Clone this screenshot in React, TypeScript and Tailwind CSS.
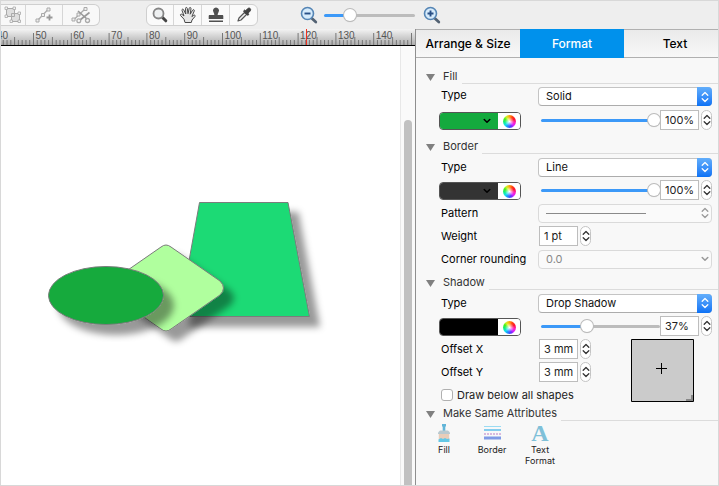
import { ReactElement, ReactNode, useEffect, useRef, useState } from "react";
import cn from "clsx";

const INPUT =
  "h-5 border border-[#bdbdbd] bg-white px-1 text-[11px] text-[#222] outline-none";

function Chevrons({ className }: { className?: string }): ReactElement {
  return (
    <svg
      viewBox="0 0 8 12"
      fill="none"
      stroke="currentColor"
      strokeWidth="1.3"
      strokeLinecap="round"
      strokeLinejoin="round"
      className={cn("h-3 w-2", className)}
    >
      <path d="M1.2 4.2 4 1.5l2.8 2.7M1.2 7.8 4 10.5l2.8-2.7" />
    </svg>
  );
}

function ChevronDown({ className }: { className?: string }): ReactElement {
  return (
    <svg
      viewBox="0 0 8 6"
      fill="none"
      stroke="currentColor"
      strokeWidth="1.5"
      strokeLinecap="round"
      strokeLinejoin="round"
      className={cn("h-1.5 w-2", className)}
    >
      <path d="M1.2 1.5 4 4.3l2.8-2.8" />
    </svg>
  );
}

function Slider({
  label,
  initial,
  className,
}: {
  label: string;
  initial: number;
  className?: string;
}): ReactElement {
  const [value, setValue] = useState(initial);

  return (
    <input
      type="range"
      aria-label={label}
      value={value}
      onChange={(e) => setValue(Number(e.target.value))}
      className={cn(
        "h-[3px] min-w-0 appearance-none rounded-full",
        "[&::-webkit-slider-thumb]:size-3 [&::-webkit-slider-thumb]:appearance-none [&::-webkit-slider-thumb]:rounded-full",
        "[&::-webkit-slider-thumb]:bg-white [&::-webkit-slider-thumb]:shadow-[0_0_0_1px_#bbb,0_1px_1px_rgba(0,0,0,.2)]",
        className
      )}
      style={{
        background: `linear-gradient(to right, #3c99f8 ${value}%, #bcbcbc ${value}%)`,
      }}
    />
  );
}

function Stepper({ label }: { label: string }): ReactElement {
  return (
    <button
      type="button"
      aria-label={label}
      className="flex h-5 w-[11px] shrink-0 items-center justify-center rounded-full border border-[#c4c4c4] bg-white text-[#333]"
    >
      <Chevrons />
    </button>
  );
}

function Select({
  id,
  options,
  disabled,
  single,
  children,
}: {
  id: string;
  options: string[];
  disabled?: boolean;
  single?: boolean;
  children?: ReactNode;
}): ReactElement {
  return (
    <div className="relative h-[19px] flex-1">
      <select
        id={id}
        disabled={disabled}
        className={cn(
          "block h-full w-full appearance-none rounded border pl-[7px] pr-5 text-[11px] outline-none",
          disabled
            ? "border-[#dadada] bg-[#fafafa] text-[#888]"
            : "border-[#c4c4c4] border-b-[#acacac] bg-white text-[#111]"
        )}
      >
        {options.map((option) => (
          <option key={option}>{option}</option>
        ))}
      </select>
      {children}
      <span
        className={cn(
          "pointer-events-none absolute inset-y-0 right-0 flex w-[15px] items-center justify-center rounded-r",
          disabled
            ? "text-[#999]"
            : "bg-linear-to-b from-[#62aefb] to-[#0a72f5] text-white"
        )}
      >
        {single ? <ChevronDown /> : <Chevrons />}
      </span>
    </div>
  );
}

function ColorWell({
  label,
  className,
  arrow = true,
}: {
  label: string;
  className: string;
  arrow?: boolean;
}): ReactElement {
  return (
    <div className="flex h-[18px] w-[82px] self-end overflow-hidden rounded border border-[#555]">
      <button
        type="button"
        aria-label={label}
        className={cn(
          "flex flex-1 items-center justify-end pr-[7px] text-black",
          className
        )}
      >
        {arrow && <ChevronDown />}
      </button>
      <button
        type="button"
        aria-label={`${label} wheel`}
        className="flex w-[22px] items-center justify-center bg-white"
      >
        <span className="size-[13px] rounded-full bg-[radial-gradient(circle,white,transparent_50%),conic-gradient(#ffa010,#ff4010,#ff1030,#ff20b0,#e020ff,#6030ff,#2080ff,#10e0f0,#10f080,#40f020,#d8f020,#ffa010)]" />
      </button>
    </div>
  );
}

function Section({
  title,
  children,
}: {
  title: string;
  children: ReactNode;
}): ReactElement {
  return (
    <section className="flex flex-col gap-[3px]">
      <h2 className="flex h-4 items-center text-[11px] text-[#333]">
        <svg viewBox="0 0 9 7" className="ml-2.5 mr-2 mt-0.5 h-[7px] w-[9px]">
          <path d="M0 0h9L4.500 7z" fill="#808080" />
        </svg>
        {title}
        <span className="ml-1 flex-1 self-end border-b border-[#dcdcdc]" />
      </h2>
      {children}
    </section>
  );
}

function Row({
  label,
  htmlFor,
  top,
  children,
}: {
  label: string;
  htmlFor: string;
  top?: boolean;
  children: ReactNode;
}): ReactElement {
  return (
    <div className={cn("flex h-5 pr-1.5", top ? "items-start" : "items-center")}>
      <label
        htmlFor={htmlFor}
        className="w-[122px] shrink-0 whitespace-nowrap pl-[25px] text-[11px] text-black"
      >
        {label}
      </label>
      {children}
    </div>
  );
}

function ColorRow({
  label,
  color,
  value,
  arrow,
}: {
  label: string;
  color: string;
  value: number;
  arrow?: boolean;
}): ReactElement {
  return (
    <div className="flex h-5 items-center pl-[23px] pr-1.5">
      <ColorWell label={`${label} color`} className={color} arrow={arrow} />
      <Slider
        label={`${label} opacity`}
        initial={value}
        className="ml-5 flex-1"
      />
      <input
        aria-label={`${label} opacity value`}
        defaultValue={`${value}%`}
        className={cn(INPUT, "w-[39px]")}
      />
      <span className="ml-0.5 flex">
        <Stepper label={`${label} opacity step`} />
      </span>
    </div>
  );
}

function MeasureRow({
  label,
  id,
  value,
}: {
  label: string;
  id: string;
  value: string;
}): ReactElement {
  return (
    <Row label={label} htmlFor={id}>
      <span className="ml-px flex gap-0.5">
        <input id={id} defaultValue={value} className={cn(INPUT, "w-[39px]")} />
        <Stepper label={`${label} step`} />
      </span>
    </Row>
  );
}

function GroupIcon(): ReactElement {
  return (
    <svg width="18" height="18" viewBox="0 0 18 18" fill="#dedede" stroke="#aaa">
      <path d="M2.500 2.500h8v8h-8zM7.500 7.500h8v8h-8z" />
      <path
        d="M1 1h2.500v2.500H1zM9 1h2.500v2.500H9zM1 9h2.500v2.500H1zM14 6h2.500v2.500H14zM6 14h2.500v2.500H6zM14 14h2.500v2.500H14z"
        fill="#f4f4f4"
        strokeWidth=".8"
      />
    </svg>
  );
}

function AddPointIcon(): ReactElement {
  return (
    <svg width="18" height="18" viewBox="0 0 18 18" fill="#eee" stroke="#aaa">
      <path d="M3 14 13 3.500" strokeWidth="1.3" />
      <path d="M1 13h3v3H1zM6.500 7.500h3v3h-3zM12 2h3v3h-3z" />
      <path d="M14.500 8.500v6M11.500 11.500h6" stroke="#999" strokeWidth="1.8" />
    </svg>
  );
}

function CutPointIcon(): ReactElement {
  return (
    <svg width="20" height="18" viewBox="0 0 20 18" fill="none" stroke="#aaa">
      <path d="M3 13.500 14 3" strokeWidth="1.3" />
      <path d="M1 12h3v3H1zM6 7h3v3H6zM13 1.500h3v3h-3z" fill="#eee" />
      <path d="m7 5 9 8M18.500 6.500 9 14" stroke="#999" strokeWidth="1.6" />
      <circle cx="7.800" cy="14.800" r="1.900" strokeWidth="1.300" />
      <circle cx="16.500" cy="14.500" r="2" strokeWidth="1.300" />
    </svg>
  );
}

function LensIcon(): ReactElement {
  return (
    <svg width="18" height="18" viewBox="0 0 18 18" fill="none">
      <path
        d="m11.500 11.500 3.300 3.300"
        stroke="#444"
        strokeWidth="3"
        strokeLinecap="round"
      />
      <circle cx="7.500" cy="7.500" r="5" fill="#eef0f1" stroke="#858585" strokeWidth="1.800" />
    </svg>
  );
}

function HandIcon(): ReactElement {
  return (
    <svg width="18" height="18" viewBox="0 0 18 18">
      <path
        d="M6 16.500 5 13.200 1.600 9.600c-.8-1 .5-2 1.400-1.200l2 1.600L3 4.400c-.4-1.300 1.200-1.800 1.700-.6L6.800 8 6.500 2.500c0-1.400 1.700-1.400 1.800 0L9 7.700l1.200-5.400c.3-1.300 2-1 1.800.4l-.8 5.500 2.400-4c.7-1.200 2.200-.4 1.600.9l-2.300 5.500 1.800-1.300c1-.7 2 .3 1.200 1.300L13 14l-.7 2.500z"
        fill="#e6e6e6"
        stroke="#484848"
      />
    </svg>
  );
}

function StampIcon(): ReactElement {
  return (
    <svg width="18" height="18" viewBox="0 0 18 18" fill="#505050">
      <path d="M9 1.500a3 3 0 0 1 2.600 4.500c-.8 1.400-.9 2-.9 3h4.500c.7 0 1.100.5 1.100 1.100V13H1.700v-2.900c0-.6.400-1.100 1.100-1.100h4.500c0-1-.1-1.600-.9-3A3 3 0 0 1 9 1.500zM2 14.500h14V16H2z" />
    </svg>
  );
}

function DropperIcon(): ReactElement {
  return (
    <svg width="18" height="18" viewBox="0 0 18 18">
      <path
        d="m3 15 1-3 5.500-5.500 2 2L6 14z"
        fill="#eee"
        stroke="#555"
        strokeWidth="1.200"
        strokeLinejoin="round"
      />
      <path
        d="m8.500 5 1.200-1 1 .8 1.800-2c1-1 2.200-.8 2.700-.2.600.6.600 1.800-.2 2.600l-2 2 .8 1-1 1.200z"
        fill="#3f3f3f"
        stroke="#3f3f3f"
      />
    </svg>
  );
}

function ZoomIcon({ plus }: { plus?: boolean }): ReactElement {
  return (
    <svg width="18" height="18" viewBox="0 0 18 18" fill="none">
      <path
        d="m12 12.500 3.800 3.500"
        stroke="#536273"
        strokeWidth="2.800"
        strokeLinecap="round"
      />
      <circle cx="7.500" cy="7.500" r="6" fill="#d6ebfb" stroke="#5585b5" strokeWidth="1.600" />
      <path
        d={plus ? "M4.500 7.500h6M7.500 4.500v6" : "M4.500 7.500h6"}
        stroke="#284f86"
        strokeWidth="1.900"
      />
    </svg>
  );
}

function ToolButton({
  label,
  className,
  children,
}: {
  label: string;
  className?: string;
  children: ReactNode;
}): ReactElement {
  return (
    <button
      type="button"
      aria-label={label}
      className={cn("flex items-center justify-center", className)}
    >
      {children}
    </button>
  );
}

function Toolbar(): ReactElement {
  return (
    <header className="flex h-7 shrink-0 items-center bg-[#eeeeee]">
      <div className="flex h-[22px] divide-x divide-[#d6d6d6] rounded-r-md border border-l-0 border-[#cfcfcf] bg-[#f8f8f8]">
        <ToolButton label="Group" className="w-[25px]">
          <GroupIcon />
        </ToolButton>
        <ToolButton label="Add point" className="w-[37px]">
          <AddPointIcon />
        </ToolButton>
        <ToolButton label="Cut path" className="w-9">
          <CutPointIcon />
        </ToolButton>
      </div>
      <div className="ml-[46px] flex h-[22px] divide-x divide-[#d6d6d6] rounded-md border border-[#cfcfcf] bg-[#fafafa]">
        <ToolButton label="Zoom" className="w-[27px]">
          <LensIcon />
        </ToolButton>
        <ToolButton label="Pan" className="w-7">
          <HandIcon />
        </ToolButton>
        <ToolButton label="Stamp" className="w-7">
          <StampIcon />
        </ToolButton>
        <ToolButton label="Pick color" className="w-[27px]">
          <DropperIcon />
        </ToolButton>
      </div>
      <ToolButton label="Zoom out" className="ml-[42px]">
        <ZoomIcon />
      </ToolButton>
      <Slider label="Zoom level" initial={25} className="ml-1.5 w-[91px]" />
      <ToolButton label="Zoom in" className="ml-2">
        <ZoomIcon plus />
      </ToolButton>
    </header>
  );
}

// one unit is a millimetre at 96dpi
const MM = 3.78;
const FIRST_TICK = 42;
const ORIGIN = 32.5 - 50 * MM;

function Ruler(): ReactElement {
  const ref = useRef<HTMLDivElement>(null);
  const [width, setWidth] = useState(0);

  useEffect(() => {
    if (!ref.current) return;
    const observer = new ResizeObserver(([entry]) =>
      setWidth(entry.contentRect.width)
    );
    observer.observe(ref.current);

    return () => observer.disconnect();
  }, []);

  const ticks = [];
  for (let n = FIRST_TICK; ORIGIN + n * MM < width; n++) ticks.push(n);

  return (
    <div
      ref={ref}
      className="h-[17px] overflow-hidden border-b border-black bg-linear-to-b from-[#f4f4f4] to-[#adadad]"
    >
      <svg width="100%" height="16" className="block">
        <text
          x="-4"
          y="10"
          fontSize="10"
          fill="#555"
          fontFamily="Liberation Sans, sans-serif"
        >
          40
        </text>
        {ticks.map((n) => {
          const x = ORIGIN + n * MM;
          const y = n % 10 === 0 ? 4 : n % 5 === 0 ? 8 : 11;
          return (
            <g key={n}>
              <path d={`M${x} ${y}V16`} stroke="#777" />
              {n % 10 === 0 && x + 20 < width && (
                <text
                  x={x + 2}
                  y="10"
                  fontSize="10"
                  fill="#555"
                  fontFamily="Liberation Sans, sans-serif"
                >
                  {n}
                </text>
              )}
            </g>
          );
        })}
        <path d="M305.500 0V16" stroke="#f03020" />
      </svg>
    </div>
  );
}

function Canvas(): ReactElement {
  return (
    <div className="flex min-h-0 flex-1 bg-white">
      <div className="min-w-0 flex-1 overflow-hidden">
        <svg width="399" height="400" viewBox="1 46 399 400" stroke="#7b7b7b">
          <defs>
            <filter id="shadow" x="-20%" y="-20%" width="150%" height="150%">
              <feDropShadow dx="10" dy="10" stdDeviation="3.500" floodOpacity=".4" />
            </filter>
          </defs>
          <path
            d="M199.500 202.500H288L309.500 316.500H179z"
            fill="#1cda75"
            filter="url(#shadow)"
          />
          <path
            d="M161 247q5-4 10 0l49 34q7 7 0 14l-49 34q-5 4-10 0l-49-34q-7-7 0-14z"
            fill="#b0ff9e"
            filter="url(#shadow)"
          />
          <ellipse
            cx="106"
            cy="295.500"
            rx="57.500"
            ry="29"
            fill="#14aa3e"
            filter="url(#shadow)"
          />
        </svg>
      </div>
      <div className="w-[15px] border-l border-[#e8e8e8] bg-[#fafafa] pl-[3px] pt-[74px]">
        <div className="h-full w-2 rounded-t-full bg-[#c1c1c1]" />
      </div>
    </div>
  );
}

function Tabs(): ReactElement {
  const [active, setActive] = useState("Format");

  return (
    <div
      role="tablist"
      className="grid h-[29px] grid-cols-[104fr_104fr_94fr] text-xs font-medium"
    >
      {["Arrange & Size", "Format", "Text"].map((tab) => (
        <button
          key={tab}
          type="button"
          role="tab"
          aria-selected={tab === active}
          onClick={() => setActive(tab)}
          className={cn(
            "whitespace-nowrap last:pl-2",
            tab === active
              ? "bg-[#0091ec] text-white"
              : "border-y border-[#b0b0b0] bg-linear-to-b from-[#eaeaea] to-[#f8f8f8] text-black"
          )}
        >
          {tab}
        </button>
      ))}
    </div>
  );
}

function BrushIcon(): ReactElement {
  return (
    <svg width="12" height="18" viewBox="0 0 12 18">
      <path d="M4 0h4v2l-.7 1v4H4.700V3L4 2z" fill="#62b5d8" />
      <path d="M2 6.500h8l2 2V10H0V8.500z" fill="#b9c9cf" />
      <path d="M.8 10h10.400v6H.8z" fill="#e8cdb9" />
      <path d="M.5 15.500 3 14l2 1 2-1 2 1 2.500-.5V18H.5z" fill="#63c8e6" />
    </svg>
  );
}

function LinesIcon(): ReactElement {
  return (
    <svg width="17" height="14" viewBox="0 0 17 14" fill="none">
      <path d="M0 .5h17" stroke="#9bdcf3" />
      <path d="M0 4h17" stroke="#85cdee" strokeWidth="2" />
      <path d="M0 8h17" stroke="#d8b9df" strokeWidth="2" strokeDasharray="2 1" />
      <path d="M0 12h17" stroke="#7f9ae6" strokeWidth="3" />
    </svg>
  );
}

function SameButton({
  icon,
  label,
  className,
}: {
  icon: ReactNode;
  label: string;
  className: string;
}): ReactElement {
  return (
    <button
      type="button"
      className={cn(
        "flex flex-col items-center gap-0.5 text-[9px] leading-[11px] text-[#222]",
        className
      )}
    >
      <span className="flex h-[18px] items-center">{icon}</span>
      {label}
    </button>
  );
}

function FormatPanel(): ReactElement {
  return (
    <aside className="w-[303px] shrink-0 border-l border-[#8f8f8f] bg-[#f8f8f8]">
      <Tabs />
      <div className="pt-2.5">
        <Section title="Fill">
          <Row label="Type" htmlFor="fill-type" top>
            <Select id="fill-type" options={["Solid", "Gradient"]} />
          </Row>
          <ColorRow label="Fill" color="bg-[#14aa3e]" value={100} />
        </Section>
        <div className="mt-2">
          <Section title="Border">
            <Row label="Type" htmlFor="border-type">
              <Select id="border-type" options={["Line", "None"]} />
            </Row>
            <ColorRow label="Border" color="bg-[#333]" value={100} />
            <Row label="Pattern" htmlFor="pattern">
              <Select id="pattern" options={[""]} disabled>
                <span className="pointer-events-none absolute left-2 top-[9px] w-[100px] border-t border-[#8a8a8a]" />
              </Select>
            </Row>
            <MeasureRow label="Weight" id="weight" value="1 pt" />
            <Row label="Corner rounding" htmlFor="corner">
              <Select id="corner" options={["0.0"]} disabled single />
            </Row>
          </Section>
        </div>
        <div className="mt-[5px]">
          <Section title="Shadow">
            <Row label="Type" htmlFor="shadow-type">
              <Select id="shadow-type" options={["Drop Shadow", "None"]} />
            </Row>
            <ColorRow label="Shadow" color="bg-black" value={37} arrow={false} />
            <div className="flex justify-between pr-6">
              <div className="flex flex-col gap-[3px]">
                <MeasureRow label="Offset X" id="offset-x" value="3 mm" />
                <MeasureRow label="Offset Y" id="offset-y" value="3 mm" />
                <label className="flex h-5 items-center gap-1 pl-[25px] text-[11px] text-[#222]">
                  <input
                    type="checkbox"
                    className="size-3 appearance-none rounded-[3px] border border-[#b0b0b0] bg-white checked:bg-[#3c99f8]"
                  />
                  Draw below all shapes
                </label>
              </div>
              <svg
                width="63"
                height="63"
                viewBox="0 0 63 63"
                fill="none"
                stroke="black"
              >
                <path d="M.5.5h62v62H.5z" fill="#cbcbcb" />
                <path d="M30.500 24v11M25 29.500h11" />
                <path d="M61 56v5H55" stroke="#888" strokeWidth="2" />
              </svg>
            </div>
          </Section>
        </div>
        <Section title="Make Same Attributes">
          <div className="flex items-start pl-3">
            <SameButton icon={<BrushIcon />} label="Fill" className="w-8" />
            <SameButton icon={<LinesIcon />} label="Border" className="ml-3.5 w-9" />
            <SameButton
              icon={
                <span className="font-['Liberation_Serif',serif] text-2xl font-bold text-[#7fc0d8]">
                  A
                </span>
              }
              label="Text Format"
              className="ml-3 w-9"
            />
          </div>
        </Section>
      </div>
    </aside>
  );
}

export default function App(): ReactElement {
  return (
    <div className="flex min-h-screen flex-col border border-[#d8d8d8] bg-[#eeeeee] font-[Inter,sans-serif]">
      <Toolbar />
      <div className="flex flex-1">
        <main className="flex min-w-0 flex-1 flex-col">
          <Ruler />
          <Canvas />
        </main>
        <FormatPanel />
      </div>
    </div>
  );
}
